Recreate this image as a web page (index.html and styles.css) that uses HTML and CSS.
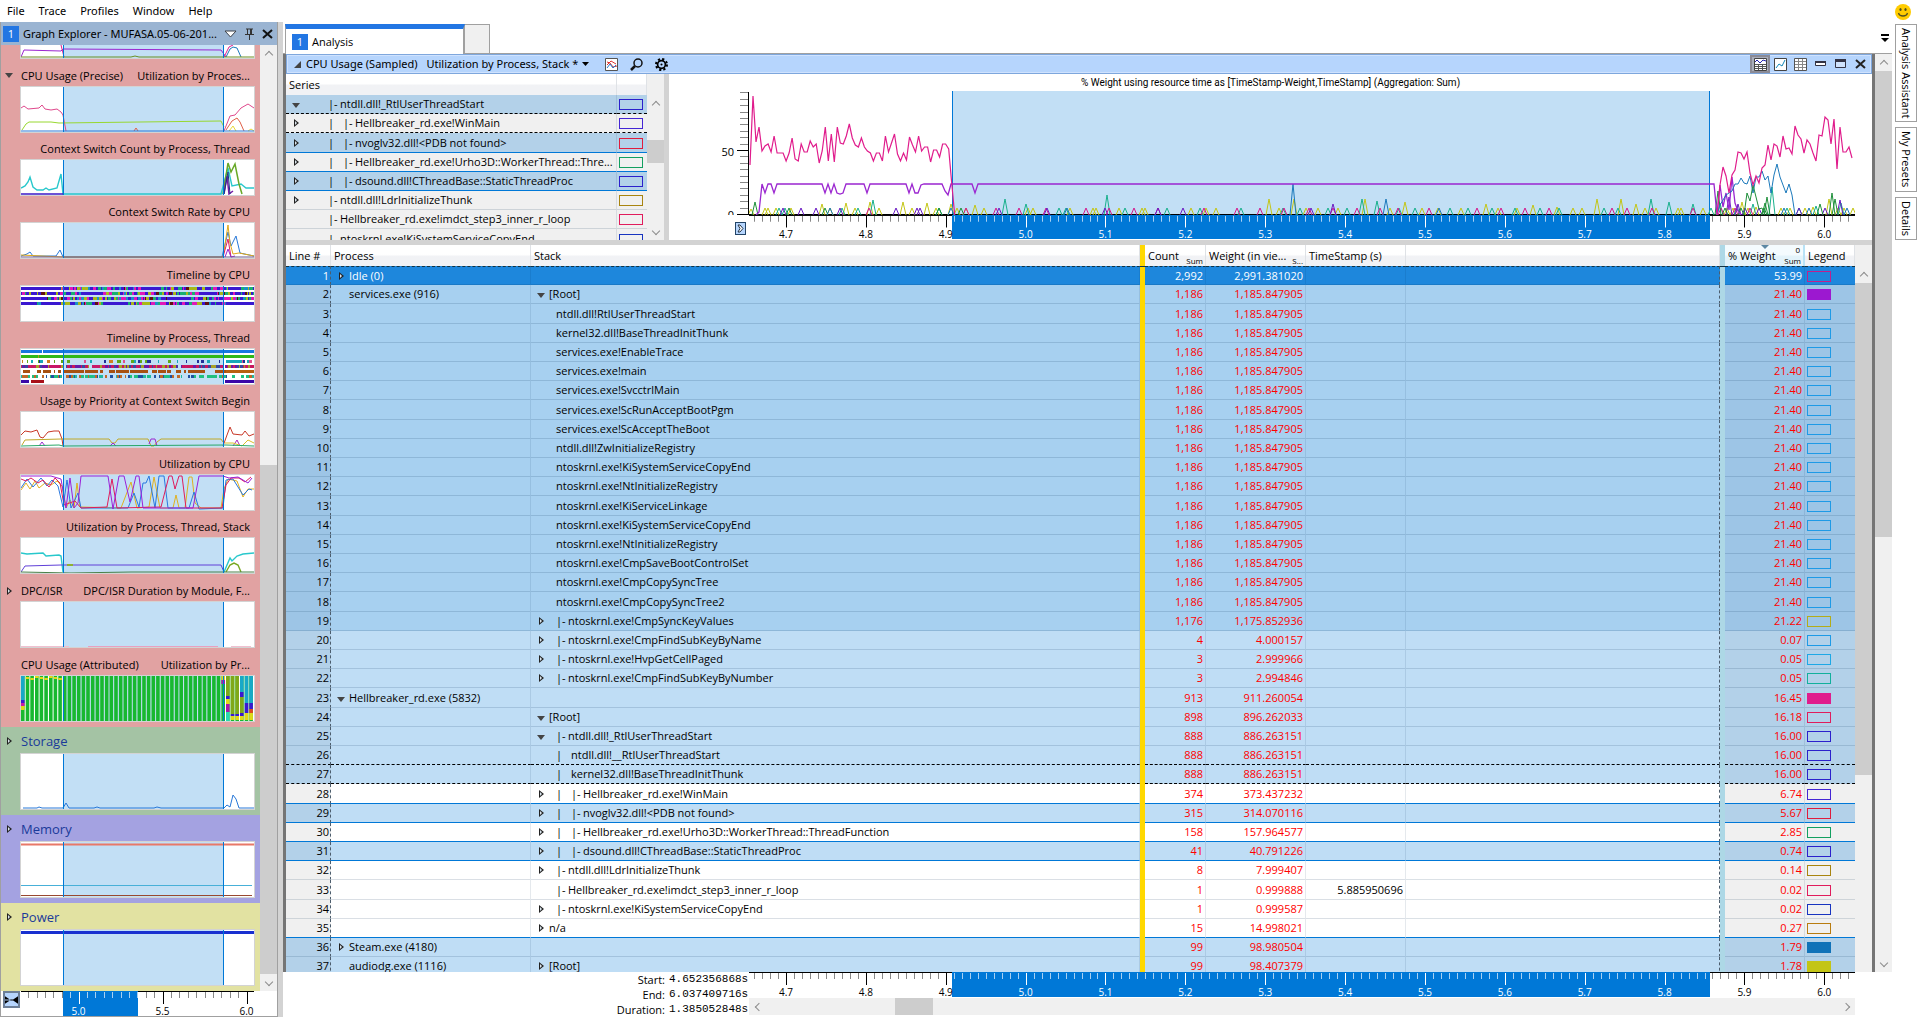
FILE: index.html
```html
<!DOCTYPE html>
<html lang="en">
<head>
<meta charset="utf-8">
<title>Windows Performance Analyzer</title>
<link rel="stylesheet" href="styles.css">
</head>
<body>
<header class="menubar">
  <nav class="menus">
    <button type="button">File</button>
    <button type="button">Trace</button>
    <button type="button">Profiles</button>
    <button type="button">Window</button>
    <button type="button">Help</button>
  </nav>
  <button type="button" class="smile" aria-label="Send feedback">
    <svg width="16" height="16" viewBox="0 0 16 16"><circle cx="8" cy="8" r="8" fill="#fc0"/><ellipse cx="5.5" cy="5.5" rx="1.1" ry="1.6" fill="#53501e"/><ellipse cx="10.5" cy="5.5" rx="1.1" ry="1.6" fill="#53501e"/><path d="M3.5 9c1 4 8 4 9 0" fill="none" stroke="#53501e" stroke-width="1.3"/></svg>
  </button>
</header>

<div class="workspace">
  <aside class="explorer">
    <div class="explorer-title">
      <span class="badge">1</span>
      <span class="explorer-name">Graph Explorer - MUFASA.05-06-201...</span>
      <button type="button" aria-label="Options"><svg width="13" height="8" viewBox="0 0 13 8"><path d="M1 1h11L6.500 7z" fill="#fff" stroke="#3c4148"/></svg></button>
      <button type="button" aria-label="Pin"><svg width="9" height="12" viewBox="0 0 9 12"><path d="M1 1h7M2.500 1v5M6.500 1v5M0 6.500h9M4.500 7v5" stroke="#333" fill="none"/><path d="M5 1h2v5H5z" fill="#333"/></svg></button>
      <button type="button" aria-label="Close"><svg width="11" height="10" viewBox="0 0 11 10"><path d="M1 1l9 8M10 1L1 9" stroke="#111" stroke-width="2"/></svg></button>
    </div>
    <div class="explorer-body">
      <div class="graphs">
        <section class="group group-cpu">
          <svg class="mini mini-clipped" data-chart="sampled"></svg>
          <h3 class="lead"><button type="button" class="tw open" aria-label="Collapse"></button><span>CPU Usage (Precise)</span><small>Utilization by Proces...</small></h3>
          <svg class="mini mini-lead" data-chart="precise"></svg>
          <h4>Context Switch Count by Process, Thread</h4>
          <svg class="mini" data-chart="count"></svg>
          <h4>Context Switch Rate by CPU</h4>
          <svg class="mini" data-chart="rate"></svg>
          <h4>Timeline by CPU</h4>
          <svg class="mini" data-chart="tlcpu"></svg>
          <h4>Timeline by Process, Thread</h4>
          <svg class="mini" data-chart="tlproc"></svg>
          <h4>Usage by Priority at Context Switch Begin</h4>
          <svg class="mini" data-chart="priority"></svg>
          <h4>Utilization by CPU</h4>
          <svg class="mini" data-chart="utilcpu"></svg>
          <h4>Utilization by Process, Thread, Stack</h4>
          <svg class="mini" data-chart="utilstack"></svg>
          <h3 class="lead"><button type="button" class="tw" aria-label="Expand"></button><span>DPC/ISR</span><small>DPC/ISR Duration by Module, F...</small></h3>
          <svg class="mini mini-lead" data-chart="dpc"></svg>
          <h3 class="lead"><i class="tw-gap"></i><span>CPU Usage (Attributed)</span><small>Utilization by Pr...</small></h3>
          <svg class="mini mini-lead" data-chart="attributed"></svg>
        </section>
        <section class="group group-storage">
          <h2><button type="button" class="tw" aria-label="Expand"></button>Storage</h2>
          <svg class="mini mini-top" data-chart="storage"></svg>
        </section>
        <section class="group group-memory">
          <h2><button type="button" class="tw" aria-label="Expand"></button>Memory</h2>
          <svg class="mini mini-top" data-chart="memory"></svg>
        </section>
        <section class="group group-power">
          <h2><button type="button" class="tw" aria-label="Expand"></button>Power</h2>
          <svg class="mini mini-top" data-chart="power"></svg>
        </section>
      </div>
      <div class="vscroll">
        <i class="arrow up"></i><i class="track grow-explorer-a"></i><i class="thumb grow-explorer-b"></i><i class="arrow down"></i>
      </div>
    </div>
    <div class="explorer-foot">
      <button type="button" class="fit" aria-label="Fit range"><svg width="14" height="8" viewBox="0 0 14 8"><path d="M0 0v8l6-4zM14 0v8L8 4zM0 3.500h14v1H0z"/></svg></button>
      <div class="ruler" data-ruler="small"></div>
    </div>
  </aside>

  <main class="content">
    <div class="tabs">
      <button type="button" class="tab active"><span class="badge">1</span>Analysis</button>
      <button type="button" class="tab blank" aria-label="New tab"></button>
      <button type="button" class="overflow" aria-label="Tab list"><svg width="8" height="8" viewBox="0 0 8 8"><path d="M0 0h8v2H0zM0 4h8L4 8z"/></svg></button>
    </div>
    <div class="stage">
      <div class="pane">
        <div class="pane-title">
          <svg width="7" height="7" viewBox="0 0 7 7"><path d="M7 0v7H0z" fill="#444"/></svg>
          <span class="graph-name">CPU Usage (Sampled)</span>
          <button type="button" class="preset">Utilization by Process, Stack *<svg width="7" height="4" viewBox="0 0 7 4"><path d="M0 0h7L3.500 4z"/></svg></button>
          <button type="button" class="ico" aria-label="Graph settings"><svg width="13" height="13" viewBox="0 0 13 13"><path d="M.5.5h12v12H.5z" fill="#fff" stroke="#555"/><path d="M2 4l3 1 3 4 4-1M2 7l4-4 5 3" stroke="#d33" fill="none"/><path d="M2 10l3-4 3 4 3-3" stroke="#27c" fill="none"/></svg></button>
          <button type="button" class="ico" aria-label="Search"><svg width="13" height="13" viewBox="0 0 13 13"><circle cx="8" cy="5" r="4" fill="none" stroke="#111" stroke-width="1.5"/><path d="M5 8l-4 4" stroke="#111" stroke-width="2.500"/></svg></button>
          <button type="button" class="ico" aria-label="View editor"><svg width="15" height="15" viewBox="0 0 15 15"><circle cx="7.500" cy="7.500" r="4.500" fill="none" stroke="#000" stroke-width="2"/><circle cx="7.500" cy="7.500" r="6.300" fill="none" stroke="#000" stroke-width="2.400" stroke-dasharray="2.500 2.450"/><circle cx="7.500" cy="7.500" r="1.200"/></svg></button>
          <span class="spacer"></span>
          <button type="button" class="ico pressed" aria-label="Graph and table"><svg width="13" height="13" viewBox="0 0 13 13"><path d="M.5.5h12v12H.5z" fill="#fff" stroke="#444"/><path d="M1 6.500h11M1 8.500h11M1 10.500h11M4.500 6v6M8.500 6v6" stroke="#555"/><path d="M1 4l2-2 3 3 3-3 3 1" stroke="#22a" fill="none"/></svg></button>
          <button type="button" class="ico" aria-label="Graph only"><svg width="13" height="13" viewBox="0 0 13 13"><path d="M.5.5h12v12H.5z" fill="#fff" stroke="#444"/><path d="M2 10l3-4 3 2 3-6" stroke="#18b" fill="none"/></svg></button>
          <button type="button" class="ico" aria-label="Table only"><svg width="13" height="13" viewBox="0 0 13 13"><path d="M.5.5h12v12H.5z" fill="#fff" stroke="#555"/><path d="M1 3.500h11M1 6.500h11M1 9.500h11M4.500 1v11M8.500 1v11" stroke="#888"/></svg></button>
          <button type="button" class="ico" aria-label="Minimize"><svg width="11" height="12" viewBox="0 0 11 12"><path d="M.5 3.500h10v4H.5z" fill="#fff" stroke="#334"/><path d="M0 3h11v2H0z" fill="#334"/></svg></button>
          <button type="button" class="ico" aria-label="Maximize"><svg width="11" height="10" viewBox="0 0 11 10"><path d="M.5.5h10v8H.5z" fill="#cfe2fc" stroke="#334"/><path d="M0 0h11v3H0z" fill="#334"/></svg></button>
          <button type="button" class="ico" aria-label="Close"><svg width="11" height="10" viewBox="0 0 11 10"><path d="M1 1l9 8M10 1L1 9" stroke="#222" stroke-width="2"/></svg></button>
        </div>

        <div class="upper">
          <div class="series">
            <table class="grid series-grid">
              <colgroup><col><col class="c-swatch"></colgroup>
              <thead><tr><th>Series</th><th></th></tr></thead>
              <tbody id="series-rows"></tbody>
            </table>
            <div class="vscroll">
              <i class="cap"></i><i class="arrow up"></i><i class="track grow-series-a"></i><i class="thumb grow-series-b"></i><i class="track grow-series-c"></i><i class="arrow down"></i>
            </div>
          </div>
          <div class="vsplit"></div>
          <div class="graph">
            <p class="graph-title">% Weight using resource time as [TimeStamp-Weight,TimeStamp] (Aggregation: Sum)</p>
            <div class="plot-grid">
              <svg class="y-axis" width="80" height="124" id="y-axis"></svg>
              <svg class="plot" viewBox="0 0 1106 124" preserveAspectRatio="none" id="plot"></svg>
              <button type="button" class="legend-toggle" aria-label="Show legend"><svg width="7" height="9" viewBox="0 0 7 9"><path d="M1 1h2l3 3.500L3 8H1l2-3.500z" fill="#fff" stroke="#234"/></svg></button>
              <div class="ruler" data-ruler="graph"></div>
            </div>
          </div>
        </div>
        <div class="hsplit"></div>

        <div class="lower">
          <table class="grid data-grid">
            <colgroup><col class="c-line"><col class="c-process"><col class="c-stack"><col class="c-bar"><col class="c-count"><col class="c-num"><col class="c-num"><col><col class="c-bar"><col class="c-pct"><col class="c-legend"></colgroup>
            <thead><tr>
              <th>Line #</th><th>Process</th><th>Stack</th><th class="gold"></th>
              <th class="agg">Count<sub>Sum</sub></th><th class="agg">Weight (in vie...<sub>S...</sub></th><th>TimeStamp (s)</th><th></th>
              <th class="ice"></th><th class="agg sorted">% Weight<sup>0</sup><sub>Sum</sub></th><th>Legend</th>
            </tr></thead>
            <tbody id="data-rows"></tbody>
          </table>
          <div class="vscroll">
            <i class="cap"></i><i class="arrow up"></i><i class="thumb grow-data-a"></i><i class="track grow-data-b"></i>
          </div>
        </div>
      </div>
      <div class="vscroll">
        <i class="arrow up"></i><i class="thumb grow-stage-a"></i><i class="track grow-stage-b"></i><i class="arrow down"></i>
      </div>
    </div>
    <footer class="range">
      <dl>
        <dt>Start:</dt><dd>4.652356868s</dd>
        <dt>End:</dt><dd>6.037409716s</dd>
        <dt>Duration:</dt><dd>1.385052848s</dd>
      </dl>
      <div class="range-axis">
        <div class="ruler" data-ruler="graph"></div>
        <div class="hscroll"><i class="arrow left"></i><i class="track grow-range-a"></i><i class="thumb grow-range-b"></i><i class="track grow-range-c"></i><i class="arrow right"></i></div>
      </div>
    </footer>
  </main>

  <nav class="rail">
    <button type="button">Analysis Assistant</button>
    <button type="button">My Presets</button>
    <button type="button">Details</button>
  </nav>
</div>
<script src="app.js"></script>
</body>
</html>
```
FILE: styles.css
```css
* { box-sizing: border-box; }
html, body { height: 100%; margin: 0; }
body {
  display: flex;
  flex-direction: column;
  overflow: hidden;
  background: #fff;
  color: #000;
  font: 11px/18px "Open Sans", "Noto Sans", sans-serif;
}
button { padding: 0; border: 0; background: none; color: inherit; font: inherit; }
h2, h3, h4, p, dl, dd { margin: 0; font-weight: 400; }
i { display: block; }
svg { display: block; }

/* Menu */
.menubar { display: flex; justify-content: space-between; height: 22px; padding: 0 9px 0 7px; }
.menus { display: flex; gap: 14px; font-family: "Noto Sans", sans-serif; }
.smile { padding-top: 2px; }

.workspace { display: flex; flex: 1; min-height: 0; }
.badge { width: 16px; height: 16px; background: #2276e3; color: #fff; line-height: 16px; text-align: center; }

/* Graph explorer */
.explorer { display: flex; flex-direction: column; width: 283px; border-left: 1px solid #a0a0a0; border-right: 5px solid #d3d3d3; }
.explorer-title { display: flex; align-items: center; gap: 8px; height: 23px; padding: 0 4px 0 2px; border-right: 1px solid #a0a0a0; background: #9ab4d2; }
.explorer-name { flex: 1; width: 0; margin: 0 -6px 0 -4px; font-family: "Noto Sans", sans-serif; white-space: nowrap; }
.explorer-body { display: flex; flex: 1; min-height: 0; border-right: 1px solid #a0a0a0; }
.graphs { flex: 1; overflow: hidden; }
.group { padding: 0 5px 5px 19px; }
.group-cpu { background: #e1a2a2; }
.group-storage { background: #a4c3a4; }
.group-memory { background: #a4a2e1; }
.group-power { background: #e2e2a2; }
.mini { width: 100%; height: 37px; border: 1px solid #d3d3d3; background: #fff; }
.mini-clipped { height: 14px; border-top: 0; }
.mini-lead { height: 47px; }
.mini-top { height: 57px; }
.group h4 { height: 26px; padding-right: 5px; font-size: 11px; line-height: 31px; text-align: right; white-space: nowrap; }
.lead { display: flex; align-items: center; height: 27px; margin-left: -15px; padding: 6px 5px 0 0; font-size: 11px; white-space: nowrap; }
.lead small { flex: 1; font-size: 11px; text-align: right; }
.group h2 { display: flex; align-items: center; height: 26px; margin-left: -15px; padding-top: 2px; color: #1a3a9a; font-size: 13px; }
.tw { display: inline-flex; flex: none; align-items: center; width: 16px; height: 9px; }
.tw-gap { width: 16px; }
.tw::before { content: ""; width: 0; height: 0; margin-left: 2px; border: 4px solid transparent; border-right: 0; border-left: 5px solid #222; }
.tw::after { content: ""; width: 0; height: 0; margin-left: -4px; border: 2px solid transparent; border-right: 0; border-left: 2px solid #dbe6ee; }
.tw.open::before { margin-left: 0; border: 4px solid transparent; border-bottom: 0; border-top: 5px solid #444; }
.tw.open::after { display: none; }
.explorer-foot { display: flex; height: 26px; border-right: 1px solid #a0a0a0; border-bottom: 1px solid #a0a0a0; }
.fit { display: flex; align-items: center; justify-content: center; width: 17px; height: 17px; margin: 0 1px 0 2px; border: 2px solid #6d7f97; background: #b6d5fd; }
.explorer-foot .ruler { flex: none; width: 233px; }

/* Scroll bars */
.vscroll { display: flex; flex: none; flex-direction: column; width: 17px; background: #f0f0f0; }
.hscroll { display: flex; height: 17px; margin-top: 1px; background: #f0f0f0; }
.track { background: #f0f0f0; }
.thumb { background: #cdcdcd; }
.cap { height: 21px; }
.arrow { display: flex; flex: none; align-items: center; justify-content: center; width: 17px; height: 17px; }
.arrow::before { content: ""; width: 5px; height: 5px; border: solid #8c8c8c; border-width: 1px 0 0 1px; }
.up::before { transform: translateY(1px) rotate(45deg); }
.down::before { transform: translateY(-1px) rotate(225deg); }
.left::before { transform: translateX(1px) rotate(-45deg); }
.right::before { transform: translateX(-1px) rotate(135deg); }
.grow-explorer-a { flex: 403; } .grow-explorer-b { flex: 509; }
.grow-series-a { flex: 28; } .grow-series-b { flex: 23; } .grow-series-c { flex: 60; }
.grow-data-a { flex: 492; } .grow-data-b { flex: 197; }
.grow-stage-a { flex: 466; } .grow-stage-b { flex: 418; }
.grow-range-a { flex: 129; } .grow-range-b { flex: 38; } .grow-range-c { flex: 905; }

/* Analysis tabs */
.content { display: flex; flex: 1; flex-direction: column; min-width: 0; }
.tabs { display: flex; align-items: flex-end; height: 32px; padding-left: 2px; border-bottom: 1px solid #a0a0a0; }
.tab { border: 1px solid #a0a0a0; border-bottom: 0; }
.tab.active { display: flex; align-items: center; gap: 4px; width: 180px; height: 30px; margin-bottom: -1px; padding: 0 6px; border-top: 5px solid #2276e3; border-right-width: 2px; background: #fff; }
.tab.blank { width: 25px; height: 29px; border-left: 0; border-right-width: 1px; background: #f0f0f0; }
.overflow { margin: 0 3px 11px auto; }

/* Analysis pane */
.stage { display: flex; flex: 1; min-height: 0; }
.pane { display: flex; flex: 1; flex-direction: column; min-width: 0; border: solid #757575; border-width: 0 3px; }
.pane-title { display: flex; align-items: center; height: 20px; padding: 0 1px 0 7px; border: 1px solid #7ea7dd; background: #b6d5fd; box-shadow: inset 0 0 0 1px #cfe2fe; font-family: "Noto Sans", sans-serif; white-space: nowrap; }
.graph-name { margin: 0 9px 0 5px; }
.preset { display: flex; align-items: center; gap: 4px; margin-right: 16px; }
.pane-title .ico { display: flex; align-items: center; justify-content: center; width: 13px; margin-right: 12px; }
.spacer { flex: 1; }
.spacer ~ .ico { width: 20px; height: 18px; margin: 0; }
.pressed { border: 2px solid #8b8b96; background: #a9aebb; }

.upper { display: flex; height: 166px; }
.series { display: flex; width: 378px; overflow: hidden; }
.vsplit { width: 5px; background: #d3d3d3; }
.hsplit { flex: none; height: 5px; background: #d3d3d3; }
.graph { flex: 1; min-width: 0; }
.graph-title { height: 17px; font-family: Roboto, sans-serif; font-size: 10px; line-height: 18px; text-align: center; }
.plot-grid { display: grid; grid-template: 124px 24px / 80px 1fr 17px; }
.plot { grid-column: 2; width: 100%; height: 124px; }
.legend-toggle { display: flex; align-items: center; justify-content: center; grid-area: 2 / 1; justify-self: end; width: 11px; height: 13px; margin: 7px 3px 0 0; border: 1px solid #246; background: #b6d5fd; }
.plot-grid .ruler { grid-area: 2 / 2; }

/* Time ruler */
.ruler { position: relative; height: 25px; font-size: 10px; line-height: 12px; }
.plot-grid .ruler { height: 24px; }
.ruler svg { width: 100%; height: 100%; }
.ruler span { position: absolute; bottom: -1px; width: 30px; margin-left: -15px; text-align: center; }
.ruler .on { color: #fff; }

/* Tables */
.grid { width: 100%; height: 0; border-spacing: 0; table-layout: fixed; line-height: 18px; }
.grid th { height: 21px; padding: 0 0 0 3px; border-right: 1px solid #dfe2e6; background: linear-gradient(#fff 45%, #f1f2f5 55%); font-weight: 400; text-align: left; white-space: nowrap; }
.grid tr { height: 19px; }
.grid tbody tr:nth-child(5n+3) { height: 20px; }
.grid td { padding: 0 3px; overflow: hidden; border-right: 1px solid rgb(0 40 80 / 10%); border-bottom: 1px solid rgb(0 40 80 / 14%); text-overflow: clip; white-space: pre; }
.grid .hot td { border-bottom: 1px solid #0078d7; }
.grid .dash td { border-bottom: 1px dashed #000; }
.swatch { display: block; width: 24px; height: 11px; margin-top: 1px; border: 1px solid var(--c); }
.swatch.solid { background: var(--c); }
.rail-half { display: inline-block; width: 7px; }
.rail-mark { display: inline-block; width: 15px; }
.dash-mark { display: inline-block; width: 12px; }
.grid .tw { width: 12px; }
.gap { display: inline-block; width: 12px; }

.series-grid .c-swatch { width: 30px; }
.series-grid tr { background: #f0f0f0; }
.series-grid .sel { background: #b3d1e9; }
.series-grid td:first-child { padding: 0 0 0 6px; }
.series-grid td:last-child { padding: 0 2px; border-right: 0; }
.series-grid .tw, .series-grid .gap { width: 36px; }

.lower { display: flex; flex: 1; min-height: 0; overflow: hidden; }
.c-line { width: 45px; } .c-process { width: 200px; } .c-stack { width: 609px; }
.c-bar { width: 5px; } .c-count { width: 61px; } .c-num { width: 100px; }
.c-pct { width: 80px; } .c-legend { width: 50px; }
.data-grid td:first-child { padding: 0 1px 0 0; border-right: 1px dashed #4c5d6d; text-align: right; }
.data-grid td:nth-child(2), .data-grid td:nth-child(3) { padding-left: 6px; }
.data-grid .num { padding: 0 2px; color: #f00; text-align: right; }
.data-grid .time { color: #000; }
.data-grid td:nth-child(8) { border-right: 1px dashed #4c5d6d; }
.data-grid td:last-child { padding: 0 2px; border-right: 0; }
.grid .gold, .grid td.gold { padding: 0; border: 0; background: #ffd800; }
.grid .ice, .grid td.ice { padding: 0; border: 0; background: #add8e6; }
.agg { position: relative; }
.agg sub { position: absolute; right: 2px; bottom: 0; font-size: 8px; line-height: 10px; }
.agg sup { position: absolute; right: 3px; top: 0; font-size: 8px; line-height: 10px; }
.grid .sorted { border-right: 2px solid #b8e2f6; background: linear-gradient(#f4fbfe 45%, #e3f3fa 55%); }
.sorted::before { content: ""; position: absolute; top: 0; left: 36px; border: 4px solid transparent; border-bottom: 0; border-top-color: #5c87a3; }
.first { background: #1e87dc; color: #fff; line-height: 17px; }
.first td:nth-child(n) { border-top: 1px dashed #134; }
.data-grid .first .num { color: #fff; }
.deep { background: #a7d0f0; }
.deep td:first-child, .deep td:nth-child(n+10) { background: #9dc5e6; }
.data-grid .sel { background: #bfddf5; }
.data-grid .sel td:first-child, .data-grid .sel td:nth-child(n+10) { background: #b3d1e9; }
.plain td:first-child, .plain td:nth-child(n+10) { background: #f0f0f0; }

/* Range footer */
.range { display: grid; flex: none; grid-template-columns: 466px 1fr 37px; height: 45px; }
.range dl { display: grid; grid-template-columns: 382px 1fr; column-gap: 4px; line-height: 15px; }
.range dt { text-align: right; }
.range dd { font-family: "Liberation Mono", monospace; }

/* Docked panel tabs */
.rail { display: flex; flex-direction: column; align-items: flex-start; gap: 5px; width: 28px; padding: 2px 0 0 3px; }
.rail button { width: 22px; padding: 3px 0; border: 1px solid #a0a0a0; line-height: 18px; writing-mode: vertical-rl; white-space: nowrap; }
```
FILE: app.js
```javascript
const line = (pts, color, width = 1) =>
  `<polyline points="${pts}" fill="none" stroke="${color}" stroke-width="${width}" vector-effect="non-scaling-stroke"/>`;
const rect = (x, y, w, h, fill) => `<rect x="${x}" y="${y}" width="${w}" height="${h}" fill="${fill}"/>`;
const random = seed => () => (seed = (seed * 16807) % 2147483647) / 2147483647;

/* Time rulers */
const rulers = {
  graph: { width: 1106, start: 37, pitch: 79.87, sub: 10, from: 203, to: 961,
    labels: ['4.7', '4.8', '4.9', '5.0', '5.1', '5.2', '5.3', '5.4', '5.5', '5.6', '5.7', '5.8', '5.9', '6.0'] },
  small: { width: 233, start: 57.5, pitch: 84, sub: 10, from: 42, to: 117, labels: ['5.0', '5.5', '6.0'] }
};
document.querySelectorAll('[data-ruler]').forEach(el => {
  const r = rulers[el.dataset.ruler];
  let art = rect(0, 0, r.width, 1, '#000') + rect(r.from, 0, r.to - r.from, 25, '#0078d7');
  for (let i = -10; i < 150; i++) {
    const x = Math.round(r.start + i * r.pitch / r.sub);
    if (x < 0 || x > r.width) continue;
    const on = x >= r.from && x < r.to;
    const major = i % r.sub === 0;
    art += rect(x, 1, 1, major ? 12 : 6, on ? (major ? '#fff' : '#a8d0f2') : (major ? '#000' : '#888'));
  }
  const labels = r.labels.map((t, i) => {
    const x = r.start + i * r.pitch;
    return `<span class="${x >= r.from && x < r.to ? 'on' : ''}" style="left:${x / r.width * 100}%">${t}</span>`;
  }).join('');
  el.innerHTML = `<svg viewBox="0 0 ${r.width} 25" preserveAspectRatio="none">${art}</svg>${labels}`;
});

/* Main graph */
let axis = rect(79, 1, 1, 123, '#000');
for (let v = 0; v <= 95; v += 5) {
  const y = Math.round(123 - v * 1.28);
  axis += v % 50 ? rect(71, y, 8, 1, '#888') : rect(68, y, 11, 1, '#000');
}
axis += '<text x="65" y="65" font-size="11" text-anchor="end">50</text><text x="65" y="128" font-size="11" text-anchor="end">0</text>';
document.getElementById('y-axis').innerHTML = axis;

const run = (start, heights, step = 3) => heights.map((h, i) => `${(start + i * step).toFixed(1)},${124 - h}`).join(' ');
const pinkLeft = [50,119,73,88,64,69,71,63,79,62,62,62,54,62,77,56,54,71,63,63,74,68,71,52,64,88,54,81,53,88,72,71,79,91,77,70,68,77,68,64,62,54,62,62,54,79,63,72,81,61,54,62,55,78,70,63,79,64,68,68,53,65,65,58,71,71,66,32,0];
const pinkRight = [0,30,48,39,22,40,45,63,62,56,63,42,30,39,32,47,50,70,55,71,69,58,79,66,67,61,89,80,76,62,75,71,62,54,80,79,98,95,71,96,46,88,63,63,68,57];
const blueRight = [0,10,15,20,22,24,31,31,37,32,31,39,22,38,38,44,35,39,22,40,51,38,30,22,31,20,0];
const violet = [[7,0],[10,3],[13,31],[16,22],[19,31],[22,31],[25,22],[28,31],[73,31],[76,22],[79,31],[82,22],[85,31],[88,22],[91,21],[94,22],[97,31],[115,31],[118,22],[121,31],[157,31],[160,22],[163,31],[166,22],[169,22],[172,30],[175,31],[193,31],[196,24],[199,20],[202,31],[223,31],[226,22],[229,31],[965,31],[968,0],[971,30],[974,8],[977,22],[980,5],[983,38],[986,12],[989,4],[992,0]];
const spikes = {
  '#c3c516': [[2,6],16,[19,7],27,42,[73,11],81,[97,12],106,[121,13],130,[154,13],163,[178,12],187,[202,11],208,217,[226,10],235,279,284,321,344,347,370,393,396,442,457,467,[520,16],530,[545,16],557,569,589,[616,16],641,[656,13],673,689,712,[737,11],749,768,[784,10],[808,8],824,833,[848,16],[872,16],[887,11],896,907,929,932,954,978,984,[993,13],999,[1007,8],1032,1041,1056,[1064,8],[1080,16],1089,1095,1104],
  '#19b08c': [30,36,93,109,[124,15],190,[256,16],[277,11],310,317,[358,20],376,418,451,492,534,551,579,598,[613,16],[628,14],650,666,701,719,743,766,791,810,855,869,[902,16],[920,13],[944,11],962,[971,12],[988,9],[1004,11],[1023,28],1038,1050,[1067,9],[1092,12]],
  '#d31a8c': [120,217,247,270,297,337,360,385,409,455,488,511,535,560,584,608,631,649,680,728,752,776,800,863,878,903,944,972,986,1001],
  '#6a1bc2': [34,52,67,91,147,168,171,250,298,356,409,434,562,[584,11],[980,18],[989,11],996,1010,1050,1076,[1091,15]],
  '#1e8f3a': [[6,13],40,76,190,212,[969,24],976,992,1015,[1016,12],[1018,18],[1071,11],[1083,22],[1086,16]],
  '#1b79bb': [[544,31],[637,16],81,202,318,690,[1035,7],1060,1098]
};
let plot = rect(203, 0, 758, 124, '#c2dff5') + rect(203, 0, 1, 124, '#0078d7') + rect(960, 0, 1, 124, '#0078d7') + rect(0, 123, 1106, 1, '#000');
for (const [color, list] of Object.entries(spikes)) {
  for (const item of list) {
    const [x, h] = Array.isArray(item) ? item : [item, 7];
    plot += line(`${x - 3},124 ${x},${124 - h} ${x + 3},124`, color);
  }
}
plot += line(violet.map(([x, h]) => `${x},${124 - h}`).join(' '), '#9b26d0', 1.3);
plot += line(run(968, blueRight), '#1b79bb') + line(run(995, [0, 22, 14, 30, 18, 6, 7, 0]), '#1e8f3a');
plot += line(run(1, pinkLeft, 3.01), '#e01c8c', 1.2) + line(run(968, pinkRight), '#e01c8c', 1.2);
document.getElementById('plot').innerHTML = plot;

/* Explorer thumbnails, all drawn on a 233 unit wide time axis */
const W = 233;
function strip(y, h, seed, colors, fill, from = 0, to = W) {
  const next = random(seed);
  let out = '';
  for (let x = from; x < to;) {
    const w = 1 + Math.floor(next() * 3);
    if (next() < fill) out += rect(x, y, Math.min(w, to - x), h, colors[Math.floor(next() * colors.length)]);
    x += w;
  }
  return out;
}
const mix = ['#3a18d0', '#e018b8', '#18b070', '#a8b818', '#1890c8', '#a8b818', '#601010', '#e018b8', '#18b070'];
const charts = {
  sampled: [13, () => line('0,12 3,5 40,6 42,4 200,5 205,12', '#9b26d0') + line('40,0 43,12', '#e01c8c') + line('203,12 208,2 212,0', '#e01c8c') + line('205,12 209,4 212,2 216,3 220,12', '#1b79bb') + line('0,12 110,12 114,11 118,12 233,12', '#6a8f20')],
  precise: [45, () => line('0,21 3,19 7,22 18,21 21,18 24,22 30,23 36,22 40,25 42,28 45,44', '#e0488c') + line('203,44 209,29 214,28 220,21 227,17 233,21', '#e0488c') + line('1,43 5,37 8,35 30,35 38,36 200,34 203,40', '#98d830') + line('113,44 115,41 117,44', '#e06048') + line('205,43 211,34 216,31 219,35 223,44', '#e06048') + line('208,44 212,39 215,44', '#e8d838') + line('227,44 230,42 233,44', '#e8d838') + line('0,44 233,44', '#2878d8')],
  count: [35, () => line('0,28 4,26 7,22 9,17 12,27 16,30 22,30 25,28 28,30 36,28 40,14 42,34 200,34 207,8 211,26 220,24 225,28 233,28', '#28c8cc', 1.4) + line('202,34 207,3 210,12 214,4 218,24 221,34', '#68a828', 1.5) + line('203,34 206,16 208,34 212,31', '#7818a8', 1.5) + line('0,34 42,34', '#3818c8', 1.5) + line('203,34 207,12 209,34', '#183880')],
  rate: [35, () => line('0,33 6,31 9,29 12,33 35,33 39,27 42,34 201,34 207,9 210,23 215,13 219,30 233,33', '#2878d8') + line('0,32 20,33 42,34 202,34 207,2 209,20 212,31 218,30 233,33', '#e0a818') + line('202,34 207,16 210,34', '#e01c5c') + line('204,34 207,26 210,34 214,33', '#9b26d0') + line('0,34 233,34', '#685890')],
  tlcpu: [35, () => [1, 6, 11, 16].map((y, i) => rect(0, y, W, 3, '#3a18d0') + strip(y, 3, 31 + i * 97, mix, .75, i === 1 ? 0 : 40 - i * 8, i === 3 ? 205 : W) + rect([120, 60, 146, 85][i], y, 20, 3, '#3a18d0') + rect([5, 178, 8, 20][i], y, 18, 3, '#3a18d0')).join('')],
  tlproc: [35, () => rect(0, 1, W, 3, '#1878e0') + rect(21, 1, 1, 3, '#fff') + rect(0, 6, W, 3, '#30b818') + rect(17, 6, 1, 3, '#a8a018') + strip(11, 3, 11, ['#e05090', '#18a8b8', '#20309a', '#60a818', '#d08020'], .35) + rect(205, 11, 16, 3, '#18a8b8') + strip(16, 3, 77, ['#c81868', '#6818a8', '#c8185c', '#a8a028', '#3848a0'], .97) + strip(21, 3, 52, ['#a85010'], .75) + rect(205, 21, 28, 3, '#b86010') + strip(26, 3, 85, ['#20c080', '#20b8a0', '#2050a0', '#c06828', '#20c080'], .75) + rect(0, 31, 8, 3, '#3a08a8') + rect(10, 31, 13, 3, '#a81018') + rect(204, 31, 29, 3, '#3a08a8')],
  priority: [35, () => line('0,23 4,19 10,20 16,18 19,25 22,26 27,20 33,19 38,19 41,27 42,34', '#c83828') + line('202,34 206,23 209,15 212,22 221,23 224,19 228,24 233,22', '#c83828') + line('1,33 4,28 40,27 88,27 91,31 94,31 97,27 127,27 130,34 133,34 136,30 140,27 200,27 202,30', '#c0a828') + line('89,34 92,31 95,34', '#9b26d0') + line('128,32 130,27 134,27 136,34', '#9b26d0') + line('18,34 21,30 24,34', '#9b26d0') + line('212,34 216,28 219,34', '#a828b8') + line('204,31 212,31 221,34 227,28 233,31', '#d8c028') + line('0,34 38,33 42,34 205,33 233,34', '#28a868')],
  utilcpu: [35, () => line('0,15 5,8 9,14 14,6 18,13 24,8 30,10 36,6 41,11 45,33 49,25 53,33 56,8 59,32 100,33 110,7 116,33 128,32 133,2 139,33 152,33 155,20 158,33 164,33 168,2 171,2 174,28 180,33 200,33 203,14 207,4 216,6 222,22 227,14 233,14', '#e0b020') + line('0,13 6,4 12,12 20,3 26,11 31,5 37,11 42,32 46,5 50,33 57,18 60,33 107,33 113,18 118,32 122,8 125,8 128,1 134,33 138,1 143,1 147,33 168,33 173,17 178,34 202,33 205,5 212,4 217,12 222,20 228,14 231,15', '#2878e0') + line('0,4 5,6 10,3 17,8 22,5 28,12 34,3 39,8 43,30 54,26 60,33 86,32 91,4 96,33 140,32 148,1 151,1 154,14 158,1 161,1 165,33 201,33 205,10 210,3 218,3 224,7 230,2', '#e01c5c') + line('0,1 30,1 40,4 45,33 49,3 53,33 57,28 60,1 87,1 92,34 98,1 103,1 109,27 115,1 118,1 122,33 172,33 178,1 202,1 208,3 217,2 227,8 231,3', '#9b20d8')],
  utilstack: [35, () => line('0,15 6,16 22,15 25,18 38,17 40,18 42,34', '#28c8cc', 1.4) + line('203,34 209,20 211,23 216,18 222,16 233,15', '#28c8cc', 1.4) + line('0,34 4,28 40,27 200,27 203,34', '#6040d8') + line('46,27 52,27', '#90b030', 2) + line('205,34 209,27 213,25 217,27 220,34', '#78a820', 1.4) + line('0,34 50,35 110,34 233,34', '#488048')],
  dpc: [45, () => rect(0, 44, 48, 1, '#f0c0d0') + rect(67, 44, 130, 1, '#e8a0c0') + rect(210, 44, 20, 1, '#f0c0d0')],
  attributed: [45, () => {
    const extra = { 0: [[0, 24, '#18a8c8'], [24, 3, '#3a18d0'], [27, 3, '#c818a8'], [30, 4, '#e0d818']], 43: [[0, 4, '#e0d818'], [4, 4, '#a818a8']], 44: [[0, 20, '#80a818'], [20, 3, '#3a18d0'], [23, 5, '#e0d818'], [28, 8, '#a818a8'], [36, 9, '#28d8b0']], 45: [[0, 38, '#80a818'], [38, 2, '#3a18d0'], [40, 4, '#e0d818']], 46: [[0, 38, '#80a818'], [38, 2, '#3a18d0'], [40, 4, '#e0d818']], 47: [[0, 16, '#18a8c8'], [16, 5, '#3a18d0'], [21, 16, '#80a818'], [37, 3, '#3a18d0'], [40, 4, '#e0d818']], 48: [[0, 27, '#18a8c8'], [27, 10, '#3a18d0'], [37, 7, '#e0d818']], 49: [[0, 27, '#18a8c8'], [27, 6, '#3a18d0'], [33, 4, '#e04820'], [37, 7, '#e0d818']] };
    let out = '';
    for (let i = 0; i < 50; i++) {
      const x = (i * 4.66).toFixed(1);
      out += rect(x, 0, 3.6, 45, '#18b830');
      if (i > 0 && i < 9) out += rect(x, i % 3, 3.6, 2, '#e0d818');
      (extra[i] || []).forEach(([y, h, c]) => { out += rect(x, y, 3.6, h, c); });
    }
    return out;
  }],
  storage: [55, () => line('2,54 16,54 18,53 21,54 42,54 45,49 48,54 73,54 76,53 79,54 133,54 136,53 140,54 203,54 206,51 209,53 212,41 215,45 218,54 233,54', '#2878d8')],
  memory: [55, () => line('0,2.500 233,2.500', '#e87868', 2) + line('0,43.500 231,43.500', '#48b0d8') + line('0,53.500 231,53.500', '#984830')],
  power: [55, () => line('0,2.500 233,2.500', '#1830d0', 3)]
};
document.querySelectorAll('[data-chart]').forEach(svg => {
  const [height, draw] = charts[svg.dataset.chart];
  svg.setAttribute('viewBox', `0 0 ${W} ${height}`);
  svg.setAttribute('preserveAspectRatio', 'none');
  svg.innerHTML = rect(42, 0, 161, height, '#c2dff5') + draw() + rect(42, 0, 1, height, '#0078d7') + rect(202, 0, 1, height, '#0078d7');
});

/* Tables */
const esc = s => s.replace(/</g, '&lt;').replace(/>/g, '&gt;');
const twist = { '>': '<button type="button" class="tw" aria-label="Expand"></button>', 'v': '<button type="button" class="tw open" aria-label="Collapse"></button>', ' ': '<span class="gap"></span>' };
// A label starts with its twisty; "_" is an indent, "/" an open branch and "-" a branch to this node.
function tree(label) {
  if (!label) return '';
  let rest = label.slice(1), marks = '';
  while ('/-_'.includes(rest[0])) {
    marks += rest[0] === '/' ? '<span class="rail-mark">|</span>' : rest[0] === '-' ? '<span class="dash-mark">|-</span>' : '<span class="rail-half"></span>';
    rest = rest.slice(1);
  }
  return twist[label[0]] + marks + esc(rest);
}
const swatch = (color, solid) => `<span class="swatch${solid ? ' solid' : ''}" style="--c:${color}"></span>`;

const series = [
  ['sel dash', 'v-ntdll.dll!_RtlUserThreadStart', '#2c20cc'],
  ['dash', '>/-Hellbreaker_rd.exe!WinMain', '#4426d4'],
  ['sel hot', '>/-nvoglv32.dll!<PDB not found>', '#e01c3c'],
  ['hot', '>/-Hellbreaker_rd.exe!Urho3D::WorkerThread::Thre...', '#12a060'],
  ['sel hot', '>/-dsound.dll!CThreadBase::StaticThreadProc', '#2c20cc'],
  ['', '>-ntdll.dll!LdrInitializeThunk', '#a88410'],
  ['', ' -Hellbreaker_rd.exe!imdct_step3_inner_r_loop', '#e01c5c'],
  ['', ' -ntoskrnl.exe!KiSystemServiceCopyEnd', '#1834c0']
];
document.getElementById('series-rows').innerHTML = series.map(([cls, label, color]) =>
  `<tr class="${cls}"><td>${tree(label)}</td><td>${swatch(color)}</td></tr>`).join('');

const services = (label) => ['deep', '', label, '1,186', '1,185.847905', '21.40', '#1e9ae6'];
const rows = [
  ['first', '>Idle (0)', '', '2,992', '2,991.381020', '53.99', '#c0208c'],
  ['deep', ' services.exe (916)', 'v[Root]', '1,186', '1,185.847905', '21.40', '#9c18d0', 1],
  ...['ntdll.dll!RtlUserThreadStart', 'kernel32.dll!BaseThreadInitThunk', 'services.exe!EnableTrace', 'services.exe!main', 'services.exe!SvcctrlMain', 'services.exe!ScRunAcceptBootPgm', 'services.exe!ScAcceptTheBoot', 'ntdll.dll!ZwInitializeRegistry', 'ntoskrnl.exe!KiSystemServiceCopyEnd', 'ntoskrnl.exe!NtInitializeRegistry', 'ntoskrnl.exe!KiServiceLinkage', 'ntoskrnl.exe!KiSystemServiceCopyEnd', 'ntoskrnl.exe!NtInitializeRegistry', 'ntoskrnl.exe!CmpSaveBootControlSet', 'ntoskrnl.exe!CmpCopySyncTree', 'ntoskrnl.exe!CmpCopySyncTree2'].map(s => services(' _' + s)),
  ['deep', '', '>_-ntoskrnl.exe!CmpSyncKeyValues', '1,176', '1,175.852936', '21.22', '#b4ac18'],
  ['sel', '', '>_-ntoskrnl.exe!CmpFindSubKeyByName', '4', '4.000157', '0.07', '#1e9ae6'],
  ['sel', '', '>_-ntoskrnl.exe!HvpGetCellPaged', '3', '2.999966', '0.05', '#1ea8e6'],
  ['sel', '', '>_-ntoskrnl.exe!CmpFindSubKeyByNumber', '3', '2.994846', '0.05', '#12b09c'],
  ['sel', 'vHellbreaker_rd.exe (5832)', '', '913', '911.260054', '16.45', '#e01c8c', 1],
  ['sel', '', 'v[Root]', '898', '896.262033', '16.18', '#e01c5c'],
  ['sel', '', 'v_-ntdll.dll!_RtlUserThreadStart', '888', '886.263151', '16.00', '#2c20cc'],
  ['sel dash', '', ' _/ntdll.dll!__RtlUserThreadStart', '888', '886.263151', '16.00', '#2c20cc'],
  ['sel dash', '', ' _/kernel32.dll!BaseThreadInitThunk', '888', '886.263151', '16.00', '#2c20cc'],
  ['plain hot', '', '>_/-Hellbreaker_rd.exe!WinMain', '374', '373.437232', '6.74', '#4426d4'],
  ['sel hot', '', '>_/-nvoglv32.dll!<PDB not found>', '315', '314.070116', '5.67', '#e01c3c'],
  ['plain hot', '', '>_/-Hellbreaker_rd.exe!Urho3D::WorkerThread::ThreadFunction', '158', '157.964577', '2.85', '#12a060'],
  ['sel hot', '', '>_/-dsound.dll!CThreadBase::StaticThreadProc', '41', '40.791226', '0.74', '#2c20cc'],
  ['plain', '', '>_-ntdll.dll!LdrInitializeThunk', '8', '7.999407', '0.14', '#a88410'],
  ['plain', '', ' _-Hellbreaker_rd.exe!imdct_step3_inner_r_loop', '1', '0.999888', '0.02', '#e01c5c', 0, '5.885950696'],
  ['plain', '', '>_-ntoskrnl.exe!KiSystemServiceCopyEnd', '1', '0.999587', '0.02', '#1834c0'],
  ['plain hot', '', '>n/a', '15', '14.998021', '0.27', '#b87c10'],
  ['sel', '>Steam.exe (4180)', '', '99', '98.980504', '1.79', '#1072b8', 1],
  ['sel', ' audiodg.exe (1116)', '>[Root]', '99', '98.407379', '1.78', '#c3c516', 1]
];
document.getElementById('data-rows').innerHTML = rows.map(([cls, process, stack, count, weight, pct, color, solid, time], i) =>
  `<tr class="${cls}"><td>${i + 1}</td><td>${tree(process)}</td><td>${tree(stack)}</td><td class="gold"></td>` +
  `<td class="num">${count}</td><td class="num">${weight}</td><td class="num time">${time || ''}</td><td></td>` +
  `<td class="ice"></td><td class="num">${pct}</td><td>${swatch(color, solid)}</td></tr>`).join('');
```
